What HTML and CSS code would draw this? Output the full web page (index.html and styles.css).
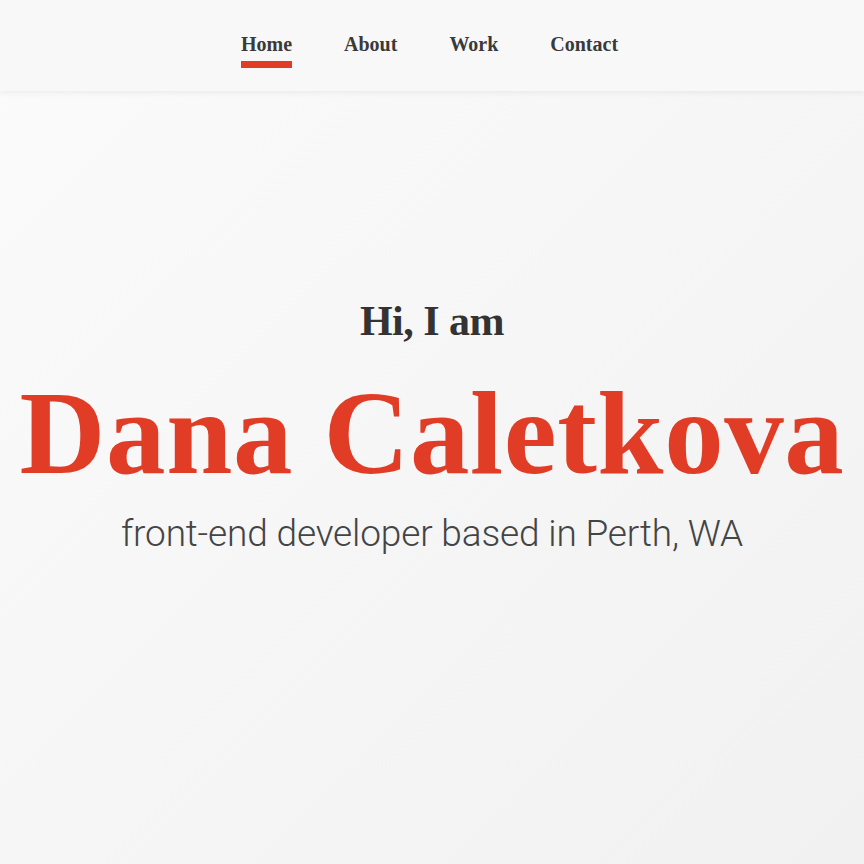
FILE: index.html
```html
<!DOCTYPE html>
<html lang="en">
<head>
<meta charset="utf-8">
<title>Dana Caletkova</title>
<link rel="stylesheet" href="styles.css">
</head>
<body>
<header class="site-header">
  <nav class="nav">
    <a class="nav-link active" href="#">Home</a>
    <a class="nav-link" href="#">About</a>
    <a class="nav-link" href="#">Work</a>
    <a class="nav-link" href="#">Contact</a>
  </nav>
</header>
<main class="hero">
  <p class="hello">Hi, I am</p>
  <h1 class="name">Dana Caletkova</h1>
  <p class="tagline">front-end developer based in Perth, WA</p>
</main>
</body>
</html>
```
FILE: styles.css
```css
* { box-sizing: border-box; }
html, body { margin: 0; padding: 0; height: 100%; }
body {
  background: linear-gradient(135deg, #fbfbfb 0%, #f1f1f1 100%);
  font-family: "Liberation Serif", serif;
  color: #333;
  display: flex;
  flex-direction: column;
}
.site-header {
  height: 91px;
  background: #f8f8f8;
  box-shadow: 0 2px 6px rgba(0,0,0,0.06);
  display: flex;
  justify-content: center;
  padding-top: 33px;
}
.nav {
  display: flex;
  gap: 52px;
  height: 36px;
  margin-right: 5px;
}
.nav-link {
  font-family: "Liberation Serif", serif;
  font-weight: bold;
  font-size: 20px;
  color: #3a3a3a;
  text-decoration: none;
  border-bottom: 7px solid transparent;
  height: 35px;
  line-height: 22px;
}
.nav-link.active { border-bottom-color: #e03c26; }
.hero {
  flex: 1;
  display: flex;
  flex-direction: column;
  align-items: center;
  padding-top: 200px;
}
.hello {
  margin: 0;
  font-size: 42px;
  font-weight: bold;
  color: #333;
  line-height: 60px;
  letter-spacing: -0.5px;
}
.name {
  margin: 0;
  font-size: 119px;
  font-weight: bold;
  color: #e03c26;
  line-height: 164px;
  letter-spacing: 0.6px;
}
.tagline {
  margin: 0;
  font-family: Roboto, sans-serif;
  font-weight: 300;
  font-size: 37px;
  color: #444;
  line-height: 37px;
  letter-spacing: -0.15px;
}
```
